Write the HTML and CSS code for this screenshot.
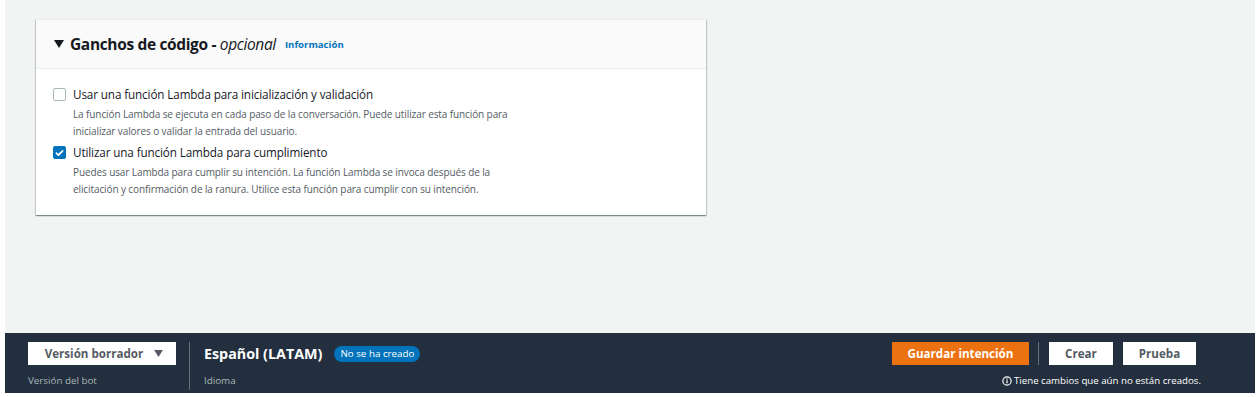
FILE: index.html
```html
<!DOCTYPE html>
<html lang="es">
<head>
  <meta charset="UTF-8">
  <meta name="viewport" content="width=device-width, initial-scale=1.0">
  <title>Ganchos de código</title>
  <link rel="stylesheet" href="styles.css">
</head>
<body>
  <div class="screen">
    <main class="content">
      <!-- Code hooks panel -->
      <section class="card">
        <div class="card-header">
          <svg class="caret" viewBox="0 0 10 8" width="10" height="8"><path d="M0 0h10L5 8z" fill="#16191f"/></svg>
          <h2>Ganchos de código - <em>opcional</em></h2>
          <a href="#" class="info-link">Información</a>
        </div>
        <div class="card-body">
          <div class="option">
            <span class="checkbox"></span>
            <div class="option-text">
              <div class="option-label">Usar una función Lambda para inicialización y validación</div>
              <p class="option-desc">La función Lambda se ejecuta en cada paso de la conversación. Puede utilizar esta función para<br>inicializar valores o validar la entrada del usuario.</p>
            </div>
          </div>
          <div class="option">
            <span class="checkbox checked">
              <svg viewBox="0 0 14 14" width="12" height="12"><path d="M3 7.2l2.6 2.6L11 4.2" fill="none" stroke="#fff" stroke-width="2.2" stroke-linecap="round" stroke-linejoin="round"/></svg>
            </span>
            <div class="option-text">
              <div class="option-label">Utilizar una función Lambda para cumplimiento</div>
              <p class="option-desc">Puedes usar Lambda para cumplir su intención. La función Lambda se invoca después de la<br>elicitación y confirmación de la ranura. Utilice esta función para cumplir con su intención.</p>
            </div>
          </div>
        </div>
      </section>
    </main>

    <!-- Sticky footer -->
    <footer class="footer">
      <div class="footer-left">
        <div class="field">
          <button class="btn btn-select">Versión borrador <svg class="select-caret" viewBox="0 0 10 8" width="9" height="7"><path d="M0 0h10L5 8z" fill="#545b64"/></svg></button>
          <div class="field-label">Versión del bot</div>
        </div>
        <div class="divider"></div>
        <div class="field">
          <div class="lang-row">
            <span class="lang">Español (LATAM)</span>
            <span class="badge">No se ha creado</span>
          </div>
          <div class="field-label">Idioma</div>
        </div>
      </div>
      <div class="footer-right">
        <div class="actions">
          <button class="btn btn-primary">Guardar intención</button>
          <div class="divider short"></div>
          <button class="btn btn-normal crear">Crear</button>
          <button class="btn btn-normal prueba">Prueba</button>
        </div>
        <div class="notice">
          <svg viewBox="0 0 12 12" width="10" height="10"><circle cx="6" cy="6" r="5" fill="none" stroke="#fff" stroke-width="1.4"/><path d="M6 5.2v3.4" stroke="#fff" stroke-width="1.5"/><circle cx="6" cy="3.5" r="0.85" fill="#fff"/></svg>
          Tiene cambios que aún no están creados.
        </div>
      </div>
    </footer>
  </div>
</body>
</html>
```

FILE: styles.css
```css
body {
  margin: 0;
  padding: 0;
  background: #fff;
  font-family: 'Open Sans', 'Noto Sans', sans-serif;
  color: #16191f;
}

.screen {
  margin: 0 5px 0 5px;
  height: 393px;
  background: #f2f3f3;
  display: flex;
  flex-direction: column;
}

.content {
  flex: 1;
  padding: 19px 0 0 31px;
}

.card {
  width: 670px;
  background: #fff;
  box-shadow: 0 1px 1px 0 rgba(0, 28, 36, 0.3), 1px 1px 1px 0 rgba(0, 28, 36, 0.15), -1px 1px 1px 0 rgba(0, 28, 36, 0.15);
  border-top: 1px solid #eaeded;
}

.card-header {
  height: 48px;
  background: #fafafa;
  border-bottom: 1px solid #eaeded;
  display: flex;
  align-items: center;
  padding-left: 18px;
}

.caret {
  margin-right: 6px;
}

.card-header h2 {
  margin: 0;
  font-size: 15.5px;
  font-weight: 700;
  letter-spacing: -0.35px;
}

.card-header h2 em {
  font-weight: 400;
}

.info-link {
  margin-left: 9px;
  font-size: 9.6px;
  font-weight: 700;
  color: #0073bb;
  text-decoration: none;
}

.card-body {
  padding: 15px 17px 17px;
}

.option {
  display: flex;
  align-items: flex-start;
}

.option + .option {
  margin-top: 2px;
}

.checkbox {
  width: 11px;
  height: 11px;
  border: 1px solid #aab7b8;
  border-radius: 2px;
  background: #fff;
  margin-top: 4px;
  margin-right: 7px;
  display: flex;
  align-items: center;
  justify-content: center;
}

.checkbox.checked {
  background: #0073bb;
  border-color: #0073bb;
}

.option-label {
  font-size: 11.7px;
  line-height: 20px;
  letter-spacing: -0.12px;
}

.option-desc {
  margin: 2px 0 0;
  font-size: 10px;
  line-height: 17px;
  color: #545b64;
  letter-spacing: -0.1px;
}

.footer {
  height: 60px;
  background: #232f3e;
  display: flex;
  justify-content: space-between;
  box-sizing: border-box;
  padding: 9px 54px 0 23px;
}

.footer-left {
  display: flex;
}

.field-label {
  font-size: 9.8px;
  color: #aab7b8;
  margin-top: 9px;
  line-height: 14px;
}

.btn {
  font-family: 'Open Sans', 'Noto Sans', sans-serif;
  font-weight: 700;
  font-size: 11.6px;
  height: 23px;
  border: none;
  padding: 0;
  cursor: pointer;
}

.btn-select {
  width: 148px;
  background: #fff;
  color: #545b64;
  display: flex;
  align-items: center;
  justify-content: center;
  padding-left: 4px;
}

.select-caret {
  margin-left: 11px;
}

.divider {
  width: 1px;
  background: #687078;
  margin: 0 14px 3px 13px;
}

.divider.short {
  height: 23px;
  margin: 0 10px 0 9px;
}

.lang-row {
  display: flex;
  align-items: center;
  height: 23px;
}

.lang {
  font-size: 14.3px;
  font-weight: 700;
  color: #fff;
}

.badge {
  margin-left: 12px;
  background: #0073bb;
  color: #fff;
  font-size: 9.8px;
  line-height: 16px;
  padding: 0 6px;
  border-radius: 8px;
}

.footer-right {
  display: flex;
  flex-direction: column;
  align-items: flex-end;
}

.actions {
  display: flex;
  padding-right: 5px;
}

.btn-primary {
  width: 137px;
  background: #ec7211;
  color: #fff;
}

.btn-normal {
  background: #fff;
  color: #545b64;
}

.crear {
  width: 64px;
  margin-right: 10px;
}

.prueba {
  width: 73px;
}

.notice {
  margin-top: 9px;
  font-size: 9.7px;
  line-height: 14px;
  color: #fff;
  display: flex;
  align-items: center;
  gap: 2px;
}
```
